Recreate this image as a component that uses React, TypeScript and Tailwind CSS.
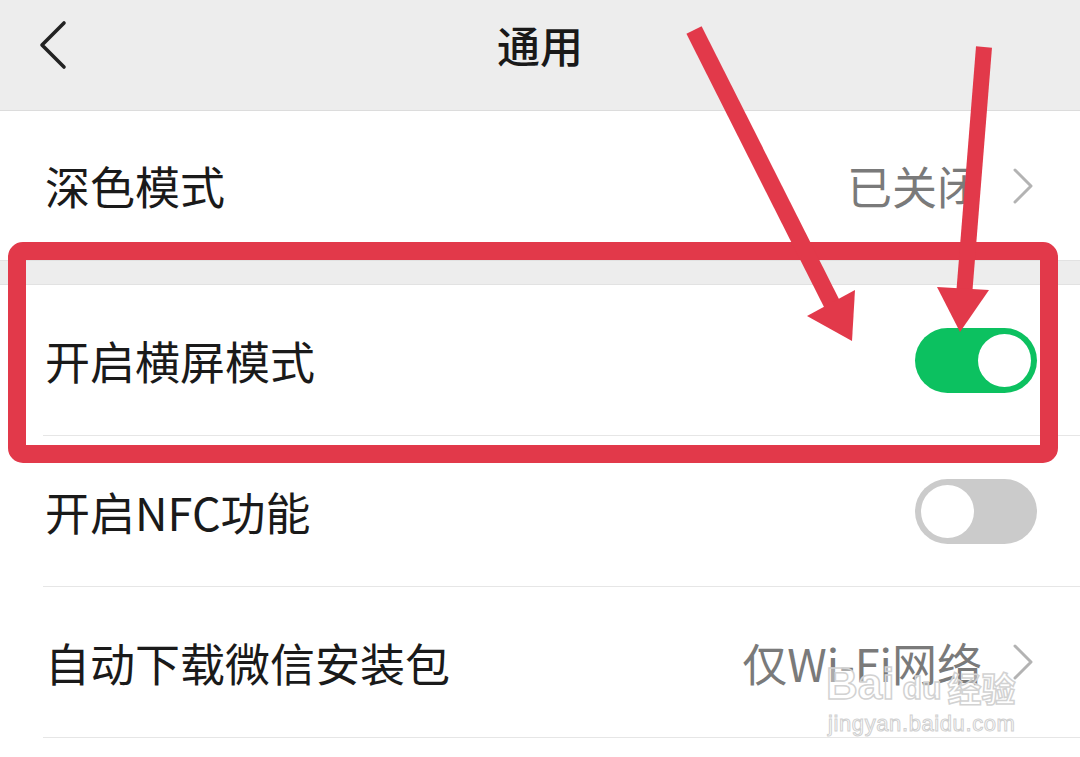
import React from "react";

const cjk = "font-['Noto_Sans_CJK_SC','Noto_Sans',sans-serif]";

const Chevron = () => (
  <svg width="22" height="38" viewBox="0 0 22 38" className="shrink-0">
    <polyline
      points="3,3 19,19 3,35"
      fill="none"
      stroke="#b3b3b3"
      strokeWidth="3"
      strokeLinecap="round"
      strokeLinejoin="round"
    />
  </svg>
);

const Toggle = ({ on }: { on: boolean }) => (
  <div
    className={`w-[122px] h-[65px] rounded-full flex items-center px-[6px] ${
      on ? "bg-[#0cc160] justify-end" : "bg-[#cbcbcb] justify-start"
    }`}
  >
    <div className="w-[53px] h-[53px] rounded-full bg-white" />
  </div>
);

interface RowProps {
  label: string;
  right: React.ReactNode;
  pr?: string;
}

const Row = ({ label, right, pr = "pr-[43px]" }: RowProps) => (
  <div className="bg-white pl-[43px]">
    <div className={`h-[151px] flex items-center justify-between border-b border-[#e6e6e6] ${pr}`}>
      <span className="text-[45px] text-[#1a1a1a] pl-[2px] leading-none">{label}</span>
      {right}
    </div>
  </div>
);

const Value = ({ text, gap }: { text: string; gap: string }) => (
  <div className={`flex items-center ${gap}`}>
    <span className="text-[45px] text-[#7a7a7a] leading-none">{text}</span>
    <Chevron />
  </div>
);

export default function App() {
  return (
    <div className={`relative w-[1080px] h-[757px] overflow-hidden bg-white ${cjk}`}>
      {/* top bar */}
      <div className="h-[111px] bg-[#ededed] border-b border-[#dcdcdc] flex items-center relative">
        <div className="pl-[38px] pb-[20px]">
          <svg width="32" height="50" viewBox="0 0 32 50">
            <polyline
              points="26,3 4,25 26,47"
              fill="none"
              stroke="#222"
              strokeWidth="3.6"
              strokeLinecap="round"
              strokeLinejoin="round"
            />
          </svg>
        </div>
        <div className="absolute inset-0 flex items-center justify-center pb-[22px]">
          <span className="text-[43px] font-medium text-[#191919] leading-none">通用</span>
        </div>
      </div>

      <div className="bg-white">
        <div className="h-[149px] flex items-center justify-between pl-[45px] pr-[46px]">
          <span className="text-[45px] text-[#1a1a1a] leading-none">深色模式</span>
          <Value text="已关闭" gap="gap-[30px]" />
        </div>
      </div>

      <div className="h-[25px] bg-[#ededed] border-y border-[#e2e2e2]" />

      <Row label="开启横屏模式" right={<Toggle on />} />
      <Row label="开启NFC功能" right={<Toggle on={false} />} />
      <Row
        label="自动下载微信安装包"
        pr="pr-[46px]"
        right={<Value text="仅Wi-Fi网络" gap="gap-[30px]" />}
      />
      <div className="h-[20px] bg-white" />

      {/* watermark */}
      <div className="absolute left-[826px] top-[662px] flex flex-col items-start pointer-events-none">
        <div className="flex items-end font-['Liberation_Sans',sans-serif] text-[44px] font-bold leading-none text-white/40 [-webkit-text-stroke:1.5px_#d2d2d2]">
          <span>Bai</span>
          <span className="text-[32px] ml-[8px] mb-[2px]">du</span>
          <span className={`${cjk} text-[34px] ml-[6px] mb-[1px]`}>经验</span>
        </div>
        <span className="font-['Liberation_Sans',sans-serif] text-[22px] leading-none mt-[7px] ml-[2px] text-white/40 [-webkit-text-stroke:1px_#d0d0d0] tracking-[0.6px]">
          jingyan.baidu.com
        </span>
      </div>

      {/* annotations */}
      <svg
        className="absolute inset-0 pointer-events-none"
        width="1080"
        height="757"
        viewBox="0 0 1080 757"
      >
        <rect
          x="17"
          y="251"
          width="1032"
          height="203"
          rx="6"
          fill="none"
          stroke="#e2394a"
          strokeWidth="18"
          strokeLinejoin="round"
        />
        <line x1="694" y1="30" x2="836" y2="312" stroke="#e2394a" strokeWidth="17" />
        <polygon points="852,341 807,316 855,290" fill="#e2394a" />
        <line x1="984" y1="47" x2="964" y2="296" stroke="#e2394a" strokeWidth="16" />
        <polygon points="960,332 937,287 989,290" fill="#e2394a" />
      </svg>
    </div>
  );
}
